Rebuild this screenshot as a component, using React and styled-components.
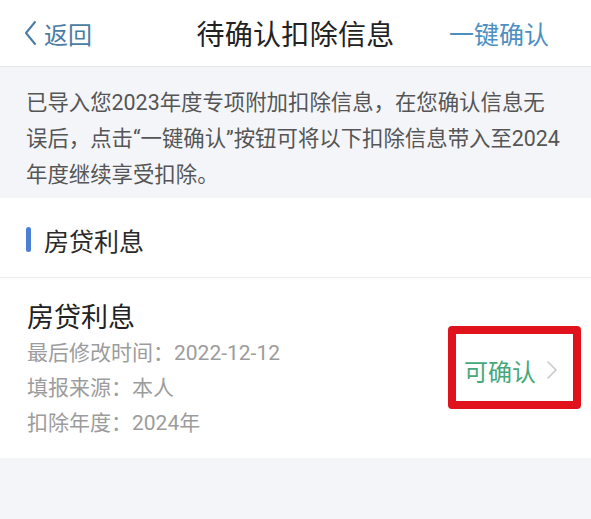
import React from "react";
import styled, { createGlobalStyle } from "styled-components";

const GlobalStyle = createGlobalStyle`
  html, body {
    margin: 0;
    padding: 0;
    background: #f4f5f9;
  }
  body {
    font-family: Roboto, "Noto Sans CJK SC", sans-serif;
  }
`;

const Page = styled.div`
  width: 591px;
  min-height: 519px;
  background: #f4f5f9;
`;

const Header = styled.header`
  height: 66px;
  background: #fff;
  border-bottom: 1px solid #e6e7eb;
  display: grid;
  grid-template-columns: 1fr auto 1fr;
  align-items: center;
  padding: 0 22px 0 24px;
`;

const BackButton = styled.div`
  display: flex;
  align-items: center;
  gap: 7px;
  color: #4a7ca3;
  font-size: 24px;
  justify-self: start;
`;

const Title = styled.div`
  font-size: 28px;
  color: #222;
  letter-spacing: 0.3px;
  margin-left: -2px;
`;

const ConfirmAll = styled.div`
  justify-self: end;
  font-size: 25px;
  color: #4d8fc2;
  margin-right: 20px;
`;

const Notice = styled.p`
  margin: 0;
  padding: 18px 4px 5px 26px;
  font-size: 21.4px;
  line-height: 36px;
  color: #555;
`;

const Section = styled.section`
  background: #fff;
`;

const SectionHeader = styled.div`
  height: 80px;
  display: flex;
  align-items: center;
  gap: 13px;
  padding: 4px 0 0 26px;
  box-sizing: border-box;
  border-bottom: 1px solid #ececef;
  font-size: 25px;
  color: #2a2a2a;
`;

const Marker = styled.span`
  width: 5px;
  height: 25px;
  border-radius: 3px;
  background: #4a7fd3;
`;

const Card = styled.div`
  height: 180px;
  display: flex;
  align-items: center;
  justify-content: space-between;
  padding: 0 10px 0 27px;
  box-sizing: border-box;
`;

const Info = styled.div`
  display: flex;
  flex-direction: column;
  margin-top: 4px;
`;

const ItemTitle = styled.div`
  font-size: 27px;
  line-height: 36px;
  color: #222;
`;

const Detail = styled.div`
  font-size: 21px;
  line-height: 35px;
  color: #9c9c9c;
`;

const StatusBox = styled.div`
  width: 133px;
  height: 83px;
  box-sizing: border-box;
  border: 8px solid #e0121c;
  border-radius: 4px;
  display: flex;
  align-items: center;
  padding: 6px 0 0 8px;
  gap: 10px;
  margin-top: -2px;
`;

const StatusText = styled.span`
  font-size: 24px;
  color: #45a87a;
`;

const Chevron = () => (
  <svg width="12" height="20" viewBox="0 0 12 20" fill="none">
    <path d="M2 2l8 8-8 8" stroke="#c8c8c8" strokeWidth="1.6" strokeLinecap="round" strokeLinejoin="round" />
  </svg>
);

const BackArrow = () => (
  <svg width="13" height="26" viewBox="0 0 13 26" fill="none">
    <path d="M11 2L2 13l9 11" stroke="#4a7ca3" strokeWidth="2" strokeLinecap="round" strokeLinejoin="round" />
  </svg>
);

export default function App() {
  return (
    <Page>
      <GlobalStyle />
      <Header>
        <BackButton>
          <BackArrow />
          返回
        </BackButton>
        <Title>待确认扣除信息</Title>
        <ConfirmAll>一键确认</ConfirmAll>
      </Header>
      <Notice>
        已导入您2023年度专项附加扣除信息，在您确认信息无
        <br />
        误后，点击“一键确认”按钮可将以下扣除信息带入至2024
        <br />
        年度继续享受扣除。
      </Notice>
      <Section>
        <SectionHeader>
          <Marker />
          房贷利息
        </SectionHeader>
        <Card>
          <Info>
            <ItemTitle>房贷利息</ItemTitle>
            <Detail>最后修改时间：2022-12-12</Detail>
            <Detail>填报来源：本人</Detail>
            <Detail>扣除年度：2024年</Detail>
          </Info>
          <StatusBox>
            <StatusText>可确认</StatusText>
            <Chevron />
          </StatusBox>
        </Card>
      </Section>
    </Page>
  );
}
